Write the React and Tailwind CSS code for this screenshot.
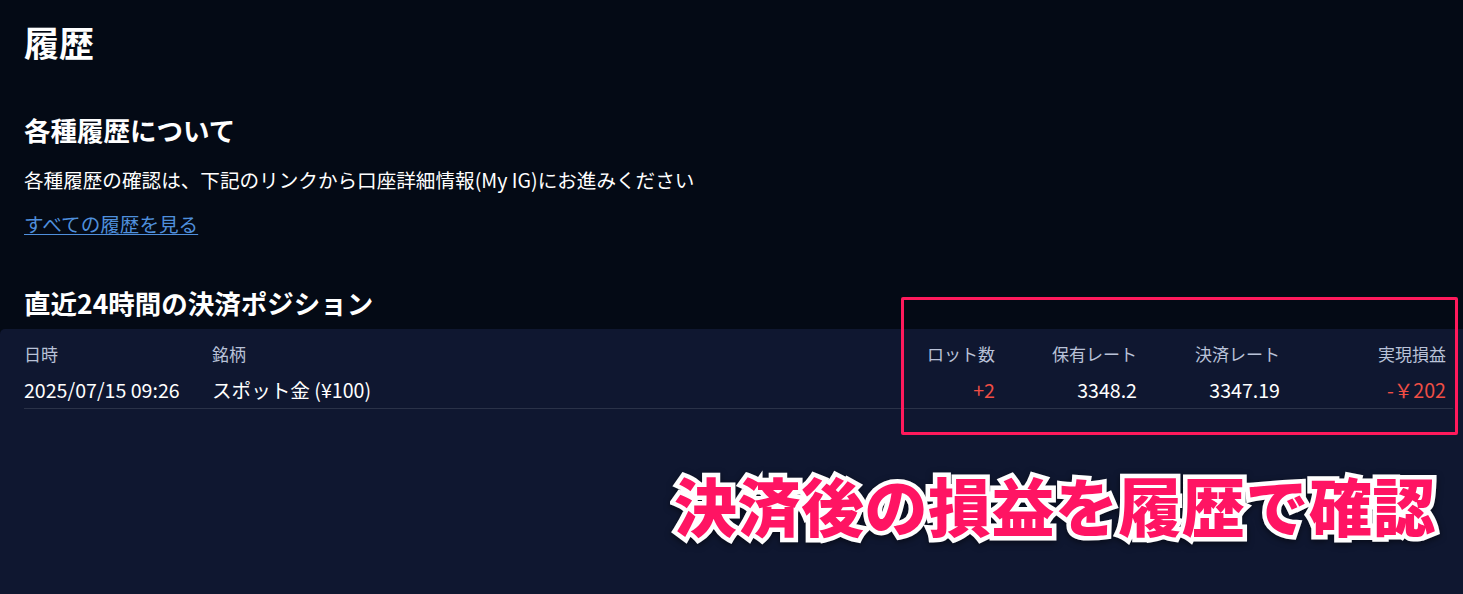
import React from 'react'

const App = () => {
  const rows = [
    { date: '2025/07/15 09:26', name: 'スポット金 (¥100)', lot: '+2', open: '3348.2', close: '3347.19', pl: '-￥202' }
  ]

  return (
    <div className="relative min-h-[594px] bg-[#040a15] text-white font-['Noto_Sans_CJK_JP','Noto_Sans',sans-serif] flex flex-col overflow-hidden">
      {/* Header */}
      <div className="px-6 pt-[16px]">
        <h1 className="text-[35px] leading-[52px] font-bold">履歴</h1>

        <h2 className="mt-[42px] text-[26.5px] leading-[40px] font-bold">各種履歴について</h2>
        <p className="mt-[15px] text-[19.6px] leading-[30px]">
          各種履歴の確認は、下記のリンクから口座詳細情報(My IG)にお進みください
        </p>
        <a href="#" className="mt-[14px] inline-block text-[19.6px] leading-[30px] text-[#4f8fdc] underline underline-offset-2">
          すべての履歴を見る
        </a>

        <h2 className="mt-[44px] text-[26.5px] leading-[40px] font-bold">直近24時間の決済ポジション</h2>
      </div>

      {/* Table panel */}
      <div className="flex-1 mt-[6px] rounded-tl-[5px] bg-[#0f1730] pl-6 pr-[10px] pt-[12px]">
        <div className="grid grid-cols-[188px_1fr_100px_142px_143px_166px] text-[17px] leading-[26px] text-[#b9c2d8] pr-[7px]">
          <div>日時</div>
          <div>銘柄</div>
          <div className="text-right">ロット数</div>
          <div className="text-right">保有レート</div>
          <div className="text-right">決済レート</div>
          <div className="text-right">実現損益</div>
        </div>
        {rows.map((r, i) => (
          <div key={i} className="grid grid-cols-[188px_1fr_100px_142px_143px_166px] text-[19.6px] leading-[30px] pt-[8px] pb-[3px] border-b border-[#2a3248] pr-[7px]">
            <div>{r.date}</div>
            <div>{r.name}</div>
            <div className="text-right text-[#ef4e45]">{r.lot}</div>
            <div className="text-right">{r.open}</div>
            <div className="text-right">{r.close}</div>
            <div className="text-right text-[#ef4e45]">{r.pl}</div>
          </div>
        ))}
      </div>

      {/* Annotation overlay */}
      <div className="absolute left-[901px] top-[297px] w-[557px] h-[138px] border-[3px] border-[#ff1a5c] rounded-[2px]" />
      <div className="absolute left-[674px] top-[459px] text-[63px] leading-[90px] font-black tracking-[0.5px] text-[#ff1463] [paint-order:stroke_fill] [-webkit-text-stroke:9px_white] drop-shadow-[0_2px_3px_rgba(0,0,0,0.5)]">
        決済後の損益を履歴で確認
      </div>
    </div>
  )
}

export default App
